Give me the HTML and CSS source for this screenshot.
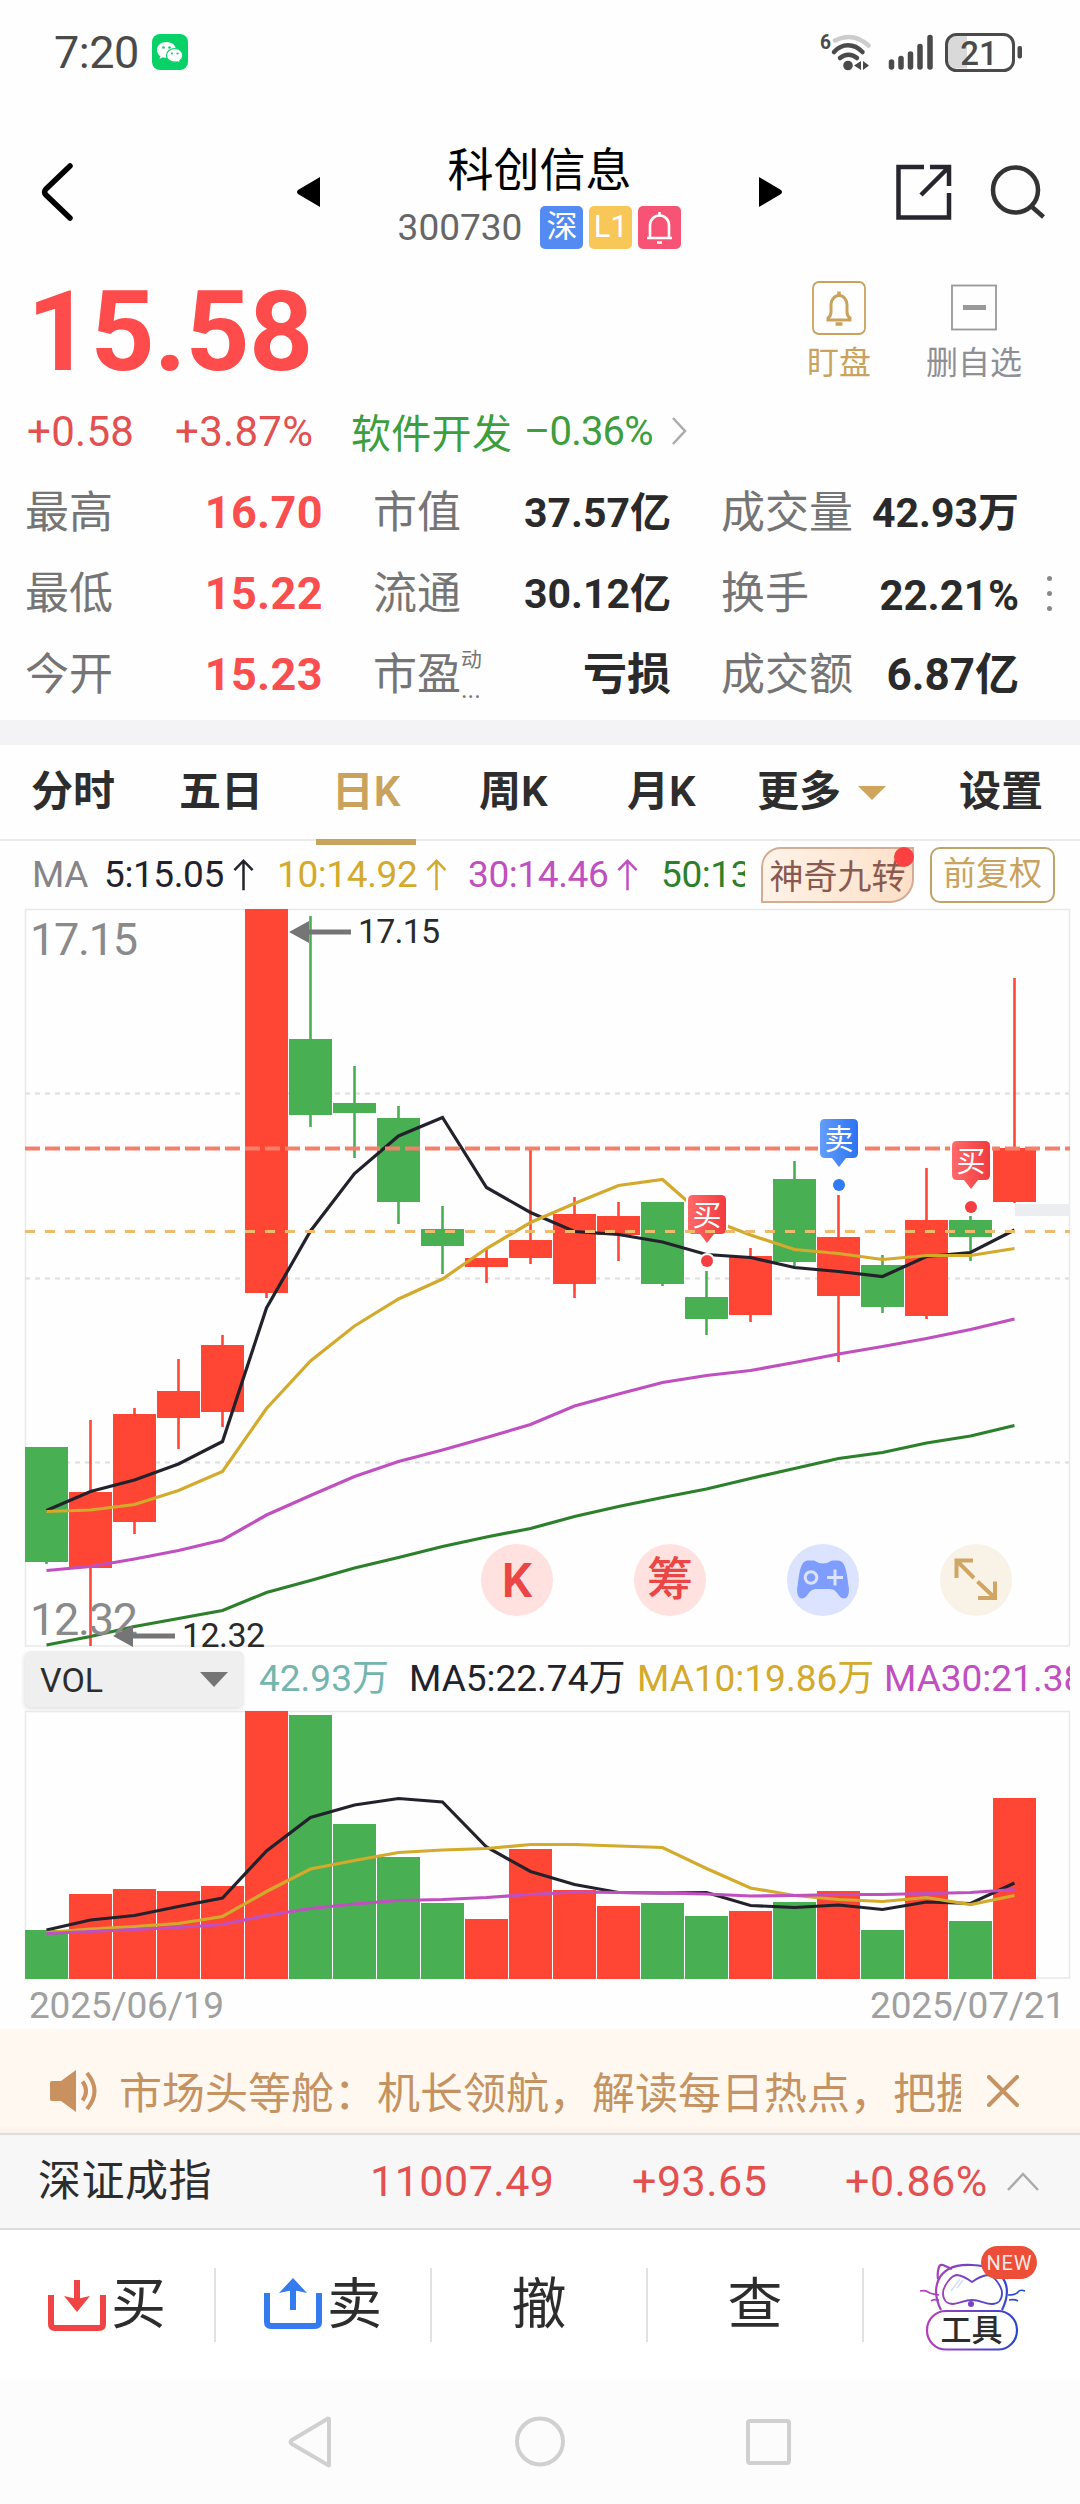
FILE: index.html
```
<!DOCTYPE html>
<html lang="zh-CN">
	<head>
		<meta charset="UTF-8">
		<meta name="viewport" content="width=device-width, initial-scale=1.0">
		<title>科创信息 300730</title>
		<link rel="stylesheet" href="styles.css">
	</head>
	<body>
		<div class="status">
			<span class="time">7:20</span>
			<svg class="wechat" viewBox="0 0 36 36">
				<rect width="36" height="36" rx="8" fill="#07d268"/>
				<path d="M14.5 8C9 8 5 11.500 5 16c0 2.600 1.300 4.700 3.300 6.200L7.500 25l3.300-1.700c1.200.400 2.400.500 3.700.500 5.500 0 9.500-3.400 9.500-7.800S20 8 14.500 8z" fill="#fff"/>
				<path d="M23 14.500c-5 0-8.500 3-8.500 6.900s3.500 6.800 8.500 6.800c1 0 2-.100 2.900-.400l2.600 1.400-.700-2.400c1.900-1.300 3-3.200 3-5.400 0-3.900-3.300-6.900-7.800-6.900z" fill="#fff" stroke="#07d268" stroke-width="1.200"/>
				<g fill="#07d268"><circle cx="11.500" cy="13.500" r="1.300"/><circle cx="17.500" cy="13.500" r="1.300"/><circle cx="20" cy="19.500" r="1.100"/><circle cx="25.500" cy="19.500" r="1.100"/></g>
			</svg>
			<svg class="signals" viewBox="820 28 206 46">
				<text x="820" y="48" font-size="20" font-weight="700" textLength="11" lengthAdjust="spacingAndGlyphs" fill="#4a4a4a">6</text>
				<g fill="none" stroke="#4a4a4a" stroke-width="4.500" stroke-linecap="round">
					<path d="M835 39.500c11-5.500 23-4.500 33.500 5" stroke="#ccc"/>
					<path d="M834 51c8-9 20-9 28.500 0"/>
					<path d="M840 57c5-4.500 12-4.500 17 0"/>
				</g>
				<circle cx="848" cy="64.500" r="4.800" fill="#4a4a4a"/>
				<path d="M861 60v9l-7-4.500zM863 60v9l6-4.500z" fill="#4a4a4a"/>
				<path d="M891.500 61v5M901 57.500v8.500M910.500 53v13M920 45.500v20.500M930 36.500v29.500" stroke="#4a4a4a" stroke-width="5.500" stroke-linecap="round"/>
				<path d="M967 34.500h-10a10 10 0 0 0-10 10v13a10 10 0 0 0 10 10h10z" fill="#d9d9d9"/>
				<rect x="946.500" y="33.500" width="67" height="36" rx="10" fill="none" stroke="#4a4a4a" stroke-width="3"/>
				<rect x="1017.500" y="45" width="4.500" height="12.500" rx="2" fill="#4a4a4a"/>
				<text x="979" y="63.500" font-size="33" font-weight="500" text-anchor="middle" fill="#4a4a4a">21</text>
			</svg>
		</div>

		<header class="header">
			<svg class="back" viewBox="0 0 32 58"><path d="M29 3 5 26q-3 3 0 6l24 23" fill="none" stroke="#000" stroke-width="5.500" stroke-linecap="round"/></svg>
			<svg class="prev" viewBox="0 0 24 30"><path d="M23 0v30L1 17q-2-2 0-4z"/></svg>
			<div class="stock">
				<h1>科创信息</h1>
				<p>300730
					<span class="tag sz">深</span><span class="tag l1">L1</span><span class="tag bell"><svg viewBox="0 0 43 43" fill="none" stroke="#fff" stroke-width="2.600"><path d="M9 32h25M12 31V19a9.500 9.500 0 0 1 19 0v12M21.500 6v4M19 36.500h5"/></svg></span>
				</p>
			</div>
			<svg class="next" viewBox="0 0 24 30"><path d="M1 0v30l22-13q2-2 0-4z"/></svg>
			<svg class="share" viewBox="896 163 56 56" fill="none" stroke="#26262e" stroke-width="4.500"><path d="M924 166h-25.500v50.500H949V192M930 166h19v19M921 194l27-27"/></svg>
			<svg class="search" viewBox="990 164 56 56" fill="none" stroke="#333" stroke-width="4.500"><circle cx="1015.500" cy="190" r="22.500"/><path d="m1031 206 12.500 11"/></svg>
		</header>

		<div class="quote">
			<div class="price">15.58</div>
			<div class="act watch">
				<svg viewBox="0 0 54 54" fill="none" stroke="#c9a25e"><rect x="1" y="1" width="52" height="52" rx="6" stroke-width="1.800"/><path d="M16 39v-2q3-2 3-6v-7a8 9.500 0 0 1 16 0v7q0 4 3 6v2z" stroke-width="3"/><path d="M27 10.500v4M23.500 43h7" stroke-width="3.500"/></svg>
				盯盘
			</div>
			<div class="act remove">
				<svg viewBox="0 0 54 54"><rect x="5" y="4.500" width="44" height="44" fill="none" stroke="#999" stroke-width="1.800"/><path d="M16 26.500h23" stroke="#999" stroke-width="5"/></svg>
				删自选
			</div>
		</div>

		<div class="change">
			<span class="up">+0.58</span>
			<span class="up">+3.87%</span>
			<span class="industry">软件开发</span>
			<span class="down">–0.36%</span>
			<svg viewBox="0 0 16 28"><path d="m2 1 12 13L2 27" fill="none" stroke="#aaa" stroke-width="2.500"/></svg>
		</div>

		<div class="stats">
			<span>最高</span><b class="red">16.70</b><span>市值</span><b>37.57亿</b><span>成交量</span><b>42.93万</b><i></i>
			<span>最低</span><b class="red">15.22</b><span>流通</span><b>30.12亿</b><span>换手</span><b class="pct">22.21%</b><i class="dots"><em></em><em></em><em></em></i>
			<span>今开</span><b class="red">15.23</b><span class="pe">市盈<small><sup>动</sup>...</small></span><b class="loss">亏损</b><span>成交额</span><b class="amount">6.87亿</b><i></i>
		</div>

		<nav class="tabs">
			<a>分时</a><a>五日</a><a class="active">日K</a><a>周K</a><a>月K</a><a class="more">更多</a><a>设置</a>
		</nav>

		<div class="ma">
			<div class="values">
				<span class="c-gray">MA</span>
				<span class="c-black">5:15.05<svg viewBox="0 0 22 34"><path d="M11 33V2M1.500 12 11 2l9.500 10"/></svg></span>
				<span class="c-gold">10:14.92<svg viewBox="0 0 22 34"><path d="M11 33V2M1.500 12 11 2l9.500 10"/></svg></span>
				<span class="c-pink">30:14.46<svg viewBox="0 0 22 34"><path d="M11 33V2M1.500 12 11 2l9.500 10"/></svg></span>
				<span class="c-green">50:13</span>
			</div>
			<div class="nine">神奇九转</div>
			<div class="adjust">前复权</div>
		</div>

		<div class="kline">
			<svg id="kline" viewBox="0 908 1080 740">
				<defs>
					<linearGradient id="buy"><stop offset="0" stop-color="#ff6a6a"/><stop offset="1" stop-color="#f23a3e"/></linearGradient>
					<linearGradient id="sell"><stop offset="0" stop-color="#649dfb"/><stop offset="1" stop-color="#2c73f2"/></linearGradient>
				</defs>
				<g id="grid" fill="none">
					<path d="M25.500 909.500H1069.500V1646H25.500z" stroke="#e9e9e9" stroke-width="1.500"/>
					<path d="M25 1093.500H1069M25 1278.500H1069M25 1462.500H1069" stroke="#dedede" stroke-width="2" stroke-dasharray="5 5"/>
				</g>
				<g id="candles"></g>
				<g id="averages"></g>
				<path d="M1015 1204h55v12h-55z" fill="#ecedf1"/>
				<path d="M25 1148.500H1070" stroke="#f4806a" stroke-width="4" stroke-dasharray="15 5"/>
				<g id="markers"></g>
				<path d="M25 1231.500H1070" stroke="#f0ba6c" stroke-width="3" stroke-dasharray="10 10"/>
				<g fill="#8a8a8a" font-size="45">
					<text x="30" y="955" textLength="108">17.15</text>
					<text x="30" y="1635" textLength="108">12.32</text>
				</g>
				<g fill="#757575">
					<path d="M289 932l20-11v8.500h42v5h-42v8.500z"/>
					<path d="M113 1636l20-11v8.500h42v5h-42v8.500z"/>
				</g>
				<g fill="#2a2a2a" font-size="34">
					<text x="358" y="943" textLength="82">17.15</text>
					<text x="182" y="1647" textLength="83">12.32</text>
				</g>
			</svg>
			<div class="tools">
				<span class="tool k">K</span>
				<span class="tool chip">筹</span>
				<span class="tool game"><svg viewBox="0 0 72 72"><path d="M21 16.500h6q9 6 18 0h6q7 0 9 15l2 14q0 9-5 9c-6 0-6-9.500-14-9.500H29c-8 0-8 9.500-14 9.500q-5 0-5-9l2-14q2-15 9-15z" fill="#7f9dff"/><circle cx="24" cy="33.500" r="5.800" fill="none" stroke="#dbe3ff" stroke-width="3"/><path d="M48 25.500v16M40 33.500h16" stroke="#dbe3ff" stroke-width="3"/></svg></span>
				<span class="tool full"><svg viewBox="0 0 72 72" fill="none" stroke="#d0a565" stroke-width="4"><path d="M33 16.500H16.500V34M17 17l17 17M38 54h17V37.500M55 54 37.500 37.500"/></svg></span>
			</div>
		</div>

		<div class="vol">
			<div class="select">VOL</div>
			<div class="vol-values">
				<span class="c-teal">42.93万</span>
				<span class="c-black">MA5:22.74万</span>
				<span class="c-gold">MA10:19.86万</span>
				<span class="c-pink">MA30:21.38</span>
			</div>
		</div>

		<svg id="volume" viewBox="0 1710 1080 270">
			<path d="M25.500 1711.500H1069.500V1978H25.500z" fill="none" stroke="#e9e9e9" stroke-width="1.500"/>
		</svg>
		<div class="dates"><span>2025/06/19</span><span>2025/07/21</span></div>

		<div class="notice">
			<svg class="speaker" viewBox="0 0 50 44"><path d="M2 12h9L26 1v42L11 32H2q-2 0-2-2V14q0-2 2-2z" fill="#c99160"/><path d="M32.500 12.500q7 9.500 0 19M37 4q15 18 0 36" fill="none" stroke="#c99160" stroke-width="4"/></svg>
			<p>市场头等舱：机长领航，解读每日热点，把握</p>
			<svg class="close" viewBox="0 0 32 32"><path d="m2 2 28 28M30 2 2 30" stroke="#c59262" stroke-width="4" stroke-linecap="round"/></svg>
		</div>

		<div class="index">
			<span>深证成指</span><span class="up">11007.49</span><span class="up">+93.65</span><span class="up">+0.86%</span>
			<svg viewBox="0 0 34 20"><path d="M2 18 17 2l15 16" fill="none" stroke="#aaa" stroke-width="2.500"/></svg>
		</div>

		<div class="actions">
			<a><svg viewBox="0 0 58 58" fill="none" stroke="#f04343" stroke-width="6"><path d="M3 19v29q0 4 4 4h44q4 0 4-4V19M29 4v28"/><path d="m16 20 13 3 13-3-13 16z" fill="#f04343" stroke="none"/></svg>买</a>
			<a><svg viewBox="0 0 58 58" fill="none" stroke="#347bf0" stroke-width="6"><path d="M3 17v29q0 4 4 4h44q4 0 4-4V17M29 34V8"/><path d="m15 17 14-15 14 15-14-3z" fill="#347bf0" stroke="none"/></svg>卖</a>
			<a>撤</a>
			<a>查</a>
			<a class="toolbox">
				<svg viewBox="900 2235 160 130" fill="none" stroke="url(#cat)" stroke-width="2.200">
					<defs><linearGradient id="cat" gradientUnits="userSpaceOnUse" x1="925" y1="0" x2="1018" y2="0"><stop offset="0" stop-color="#b83fb8"/><stop offset="1" stop-color="#2748d0"/></linearGradient></defs>
					<path d="M941 2310q-8-16-3-29c5-12 17-17 34-16s28 5 33 17q5 12-3 28M938 2279q-1-7 1-12 1-3 4-2l9 4M1007 2279q1-7 0-11"/>
					<path d="M957 2275q7 1 15 7 8-6 16-7c6 0 14 12 14 18 0 7-4 11-10 11-7 0-12-4-20-4s-13 4-19 4-10-4-10-11c0-6 8-18 14-18z" stroke-width="1.800"/>
					<path d="M939 2295q-8-1-11-3t-8-1M939 2300q-6-1-8 1M1008 2295q8 0 10-3t7-1M1009 2300q6-1 9 1" stroke-width="1.600"/>
					<path d="m951 2291 9-12M957 2288l6-8" stroke="#d5dcf8" stroke-width="1.500"/>
					<rect x="927" y="2311" width="90" height="38.500" rx="19"/>
					<circle cx="971" cy="2304" r="3" fill="#7d3fcb" stroke="none"/>
					<rect x="981" y="2246" width="56" height="33" rx="16.500" fill="#ed4e37" stroke="none"/>
					<text x="1009" y="2269.500" font-size="20" text-anchor="middle" textLength="45" fill="#fff" fill-opacity=".9" stroke="none">NEW</text>
					<text x="971.500" y="2341" font-size="31" text-anchor="middle" textLength="62" fill="#2d2d2d" font-weight="500" stroke="none">工具</text>
				</svg>
			</a>
		</div>

		<div class="sysnav">
			<svg viewBox="270 2400 540 84" fill="none" stroke="#d0d0d0" stroke-width="4">
				<path d="M329 2419.500v45.500q0 1-1 0l-36-21q-3-2 0-4l36-21.500q1 0 1 1z"/>
				<circle cx="540" cy="2441.500" r="23"/>
				<rect x="748" y="2421" width="41" height="42" rx="2"/>
			</svg>
		</div>
		<script src="chart.js"></script>
	</body>
</html>
```
FILE: styles.css
```
* {
	box-sizing: border-box;
}

body {
	margin: 0;
	width: 1080px;
	background-color: #fefefe;
	color: #2d2d2d;
	font-family: Roboto, "Noto Sans CJK SC", sans-serif;
}

h1, p {
	margin: 0;
	font-weight: 400;
}

svg {
	display: block;
	flex: none;
}

/* top of the screen */

.status {
	display: flex;
	align-items: center;
	height: 104px;
	padding: 0 54px 0 54px;
}

.time {
	width: 98px;
	font-size: 45px;
	letter-spacing: -0.5px;
	color: #4a4a4a;
}

.wechat {
	width: 36px;
	height: 36px;
}

.signals {
	width: 206px;
	height: 46px;
	margin-left: auto;
}

.header {
	display: flex;
	align-items: center;
	height: 176px;
	padding: 0 34px 0 41px;
}

.back {
	width: 32px;
	height: 58px;
}

.prev {
	width: 24px;
	height: 30px;
	margin-left: 224px;
}

.next {
	width: 24px;
	height: 30px;
}

.stock {
	width: 437px;
	text-align: center;
}

.stock h1 {
	margin-top: 11px;
	font-size: 46px;
	line-height: 60px;
	color: #000;
}

.stock p {
	display: flex;
	align-items: center;
	justify-content: center;
	gap: 6px;
	font-size: 37px;
	line-height: 56px;
	color: #666;
}

.tag {
	width: 43px;
	height: 43px;
	border-radius: 5px;
	font-size: 31px;
	line-height: 42px;
	color: #fff;
}

.sz {
	margin-left: 12px;
	background-color: #548bf2;
}

.l1 {
	background-color: #f7c757;
}

.bell {
	background-color: #f75475;
}

.share {
	width: 56px;
	height: 56px;
	margin-left: 114px;
}

.search {
	width: 56px;
	height: 56px;
	margin-left: auto;
}

/* quote */

.quote {
	display: flex;
	height: 110px;
}

.price {
	width: 775px;
	padding-left: 27px;
	font-size: 112px;
	font-weight: 700;
	line-height: 103px;
	letter-spacing: -0.8px;
	color: #fe4b4b;
}

.act {
	display: flex;
	flex-direction: column;
	align-items: center;
	width: 128px;
	font-size: 32px;
	line-height: 56px;
}

.act svg {
	width: 54px;
	height: 54px;
	margin-top: 1px;
}

.watch {
	color: #c9a25e;
}

.remove {
	width: 142px;
	color: #8f8f94;
}

.up {
	color: #e35050;
}

.down, .industry {
	color: #3c9e3c;
}

.change {
	display: grid;
	grid-template-columns: 148px 176px 173px 147px 16px;
	align-items: center;
	height: 82px;
	padding-left: 27px;
	font-size: 42px;
	letter-spacing: 0.3px;
}

.change .industry {
	font-size: 40px;
}

.change .down {
	font-size: 40px;
	letter-spacing: -0.8px;
}

.change svg {
	width: 16px;
	height: 28px;
}

.stats {
	display: grid;
	grid-template-columns: 130px 168px 200px 148px 190px 158px 60px;
	grid-auto-rows: 81px;
	align-items: center;
	height: 248px;
	padding-left: 25px;
	font-size: 44px;
	line-height: 60px;
	color: #757575;
}

.stats > span {
	white-space: nowrap;
}

.stats > span:nth-child(7n + 3) {
	padding-left: 50px;
}

.stats > span:nth-child(7n + 5) {
	padding-left: 50px;
}

.stats b {
	justify-self: end;
	font-size: 41px;
	color: #2a2a2a;
	white-space: nowrap;
}

.stats b.red {
	font-size: 45px;
	letter-spacing: 0.4px;
	color: #fb4e4e;
}

.stats .pct {
	padding-top: 4px;
	font-size: 42px;
}

.stats .loss {
	font-size: 44px;
}

.stats .amount {
	font-size: 44px;
}

.stats .pe {
	display: flex;
}

.pe small {
	display: flex;
	flex-direction: column;
	font-size: 25px;
	line-height: 30px;
}

.pe sup {
	height: 30px;
	line-height: 30px;
	vertical-align: baseline;
}

.dots {
	display: grid;
	gap: 10px;
	justify-self: center;
}

.dots em {
	width: 5px;
	height: 5px;
	border-radius: 50%;
	background-color: #888;
}

/* period tabs */

.tabs {
	display: grid;
	grid-template-columns: 148px 137px 163px 148px 130px 202px 120px;
	height: 121px;
	padding-left: 31px;
	border-top: 25px solid #f3f3f5;
	border-bottom: 2px solid #ebebeb;
	font-size: 42px;
	font-weight: 600;
	line-height: 94px;
}

.tabs .active {
	width: 100px;
	border-bottom: 6px solid #c9a25e;
	text-align: center;
	color: #c9a25e;
}

.more::after {
	content: "";
	display: inline-block;
	margin-left: 17px;
	border: 14px solid transparent;
	border-top-color: #d0a45a;
	border-bottom: none;
	vertical-align: 6px;
}

.ma {
	display: flex;
	align-items: center;
	height: 67px;
	padding-left: 32px;
}

.values {
	display: grid;
	grid-template-columns: 72px 173px 191px 193px 84px;
	overflow: hidden;
	padding-top: 1px;
	font-size: 37px;
	line-height: 60px;
	letter-spacing: -0.4px;
}

.values span {
	display: flex;
	align-items: center;
}

.values svg {
	width: 21px;
	height: 34px;
	margin-left: 9px;
	fill: none;
	stroke: currentColor;
	stroke-width: 2.6;
}

.c-gray { color: #858589; }
.c-black { color: #22222c; }
.c-gold { color: #d3aa2b; }
.c-pink { color: #c04fc0; }
.c-green { color: #2c802c; }
.c-teal { color: #74b5ae; }

.nine {
	position: relative;
	width: 153px;
	height: 56px;
	margin-left: 16px;
	border: 2px solid #d2ad93;
	border-radius: 20px 0 24px 0;
	background-image: linear-gradient(100deg, #fff3e9, #fddfc6);
	font-size: 34px;
	line-height: 57px;
	text-align: center;
	color: #8a5a50;
	white-space: nowrap;
}

.nine::after {
	content: "";
	position: absolute;
	top: -2px;
	right: -2px;
	width: 20px;
	height: 20px;
	border-radius: 50%;
	background-color: #fa4040;
}

.adjust {
	width: 125px;
	height: 56px;
	margin-left: 16px;
	border: 2.5px solid #bfa468;
	border-radius: 10px;
	font-size: 33px;
	line-height: 49px;
	text-align: center;
	color: #c9a25e;
}

/* charts */

.kline {
	position: relative;
	height: 740px;
}

#kline {
	width: 1080px;
	height: 740px;
}

#kline .tag-text {
	font-size: 29px;
	fill: #fff;
	text-anchor: middle;
}

.tools {
	position: absolute;
	left: 481px;
	top: 636px;
	display: flex;
	gap: 81px;
}

.tool {
	width: 72px;
	height: 72px;
	border-radius: 50%;
	background-color: #ffe1df;
	font-size: 46px;
	line-height: 70px;
	text-align: center;
	color: #ea4646;
}

.k {
	font-size: 48px;
	font-weight: 600;
	line-height: 73px;
}

.chip {
	font-weight: 500;
}

.game {
	background-color: #dbe3ff;
}

.full {
	background-color: #f9f2e6;
}

.vol {
	display: flex;
	height: 62px;
	padding: 3px 9px 0 25px;
}

.select {
	display: flex;
	align-items: center;
	justify-content: space-between;
	flex: none;
	width: 219px;
	height: 56px;
	padding: 1px 16px 0 15px;
	border-radius: 6px;
	background-color: #efefef;
	box-shadow: -1px 2px 4px rgba(0, 0, 0, .12);
	font-size: 34px;
}

.select::after {
	content: "";
	border: 14px solid transparent;
	border-top: 15px solid #757575;
	border-bottom: none;
}

.vol-values {
	display: grid;
	grid-template-columns: 150px 228px 247px 186px;
	margin-left: 15px;
	overflow: hidden;
	font-size: 37px;
	line-height: 55px;
	white-space: nowrap;
}

#volume {
	width: 1080px;
	height: 270px;
}

.dates {
	display: flex;
	justify-content: space-between;
	height: 49px;
	padding: 0 15px 0 29px;
	font-size: 37px;
	line-height: 51px;
	letter-spacing: -0.2px;
	color: #a0a0a0;
}

/* bottom bars */

.notice {
	display: flex;
	align-items: center;
	height: 104px;
	padding: 20px 61px 0 50px;
	background-image: linear-gradient(#fef8f1 92%, #f8f2eb);
	font-size: 43px;
	color: #c59262;
}

.speaker {
	width: 50px;
	height: 44px;
}

.notice p {
	width: 842px;
	margin: -2px 0 0 19px;
	overflow: hidden;
	white-space: nowrap;
}

.close {
	width: 32px;
	height: 32px;
	margin-left: auto;
}

.index {
	display: grid;
	grid-template-columns: 332px 262px 213px 161px 34px;
	align-items: center;
	height: 97px;
	padding-left: 38px;
	border-top: 2px solid #ddd;
	border-bottom: 2px solid #ddd;
	background-color: #f7f7f7;
	font-size: 43px;
	letter-spacing: 0.5px;
}

.index span {
	line-height: 60px;
	margin-top: -1px;
}

.index svg {
	width: 34px;
	height: 20px;
}

.actions {
	display: grid;
	grid-template-columns: repeat(5, 216px);
	height: 150px;
	background-color: #fff;
	font-size: 55px;
	line-height: 70px;
}

.actions a {
	display: flex;
	align-items: center;
	justify-content: center;
	gap: 5px;
	height: 74px;
	margin-top: 38px;
	padding-bottom: 3px;
	border-right: 2px solid #e2e2e2;
}

.actions a > svg {
	width: 58px;
	height: 58px;
	margin-top: 2px;
}

.actions .toolbox {
	height: 130px;
	margin-top: 5px;
	padding-bottom: 0;
	border-right: none;
}

.actions .toolbox > svg {
	width: 160px;
	height: 130px;
	margin: 0 0 0 16px;
}

.sysnav {
	height: 124px;
	padding: 20px 270px 0;
	background-color: #fcfcfc;
}

.sysnav svg {
	width: 540px;
	height: 84px;
}
```
FILE: chart.js
```
const $ = (x) => document.querySelector(x);

const RED = "#ff4634";
const GREEN = "#49af53";
const left = 25, step = 44, width = 43;

// color, wick top, body top, body bottom, wick bottom
const candles = [
	[GREEN, 1447, 1447, 1562, 1564],
	[RED, 1420, 1492, 1568, 1646],
	[RED, 1408, 1414, 1522, 1534],
	[RED, 1359, 1391, 1418, 1449],
	[RED, 1335, 1345, 1412, 1427],
	[RED, 909, 909, 1293, 1298],
	[GREEN, 916, 1039, 1115, 1127],
	[GREEN, 1066, 1103, 1113, 1158],
	[GREEN, 1106, 1118, 1202, 1224],
	[GREEN, 1206, 1229, 1246, 1274],
	[RED, 1248, 1258, 1267, 1283],
	[RED, 1149, 1240, 1258, 1264],
	[RED, 1197, 1214, 1284, 1298],
	[RED, 1202, 1216, 1235, 1261],
	[GREEN, 1202, 1202, 1284, 1286],
	[GREEN, 1271, 1297, 1319, 1335],
	[RED, 1248, 1256, 1315, 1322],
	[GREEN, 1161, 1179, 1262, 1266],
	[RED, 1195, 1237, 1296, 1362],
	[GREEN, 1255, 1265, 1307, 1313],
	[RED, 1168, 1220, 1316, 1319],
	[GREEN, 1216, 1220, 1237, 1261],
	[RED, 978, 1148, 1202, 1203]
];

const averages = {
	"#22222c": [1510.5, 1491.5, 1480, 1464, 1441.5, 1308, 1231, 1173.5, 1136, 1117.5, 1187.5, 1212.5, 1231.5, 1234.5, 1242, 1254.5, 1257.5, 1267.5, 1271.5, 1276.5, 1256.5, 1252.5, 1230],
	"#d3aa2b": [1511.5, 1510, 1504.5, 1490.5, 1471.5, 1408.5, 1361, 1326, 1299, 1279, 1248.5, 1222.5, 1203.5, 1185.5, 1179.5, 1218, 1235, 1249.5, 1253.5, 1259.5, 1255.5, 1255.5, 1248.5],
	"#c04fc0": [1570.5, 1566.5, 1559, 1550.5, 1540, 1515, 1495.5, 1476.5, 1461.5, 1450, 1437.5, 1424.5, 1406, 1394, 1382.5, 1375.5, 1370.5, 1362.5, 1354, 1346.5, 1338.5, 1329.5, 1319],
	"#2c802c": [1645, 1636.5, 1626.5, 1618.5, 1610.5, 1592.5, 1580.5, 1568, 1557.5, 1546.5, 1537, 1528.5, 1516.5, 1506.5, 1497.5, 1489, 1478.5, 1468.5, 1458.5, 1452.5, 1443, 1436, 1425.5]
};

const volumes = [1930, 1894, 1889, 1891, 1886, 1711, 1715, 1824, 1857, 1903, 1919, 1849, 1890, 1906, 1903, 1916, 1911, 1902, 1891, 1930, 1876, 1921, 1798];

const volumeAverages = {
	"#22222c": [1930, 1920, 1915.5, 1906.5, 1898, 1851, 1817.5, 1805, 1798.5, 1802, 1847, 1871.5, 1884.5, 1892.5, 1893, 1892.5, 1905.5, 1907.5, 1905, 1909.5, 1902, 1903.5, 1883],
	"#d3aa2b": [1932.5, 1929, 1926.5, 1923.5, 1916.5, 1891.5, 1869, 1860.5, 1852.5, 1850, 1848.5, 1844.5, 1844.5, 1846, 1847.5, 1868.5, 1888, 1895.5, 1899.5, 1901.5, 1897.5, 1904.5, 1895.5],
	"#c04fc0": [1933.5, 1931.5, 1929.5, 1927.5, 1924.5, 1915.5, 1908.5, 1904, 1900.5, 1899.5, 1897.5, 1894.5, 1892, 1892.5, 1893, 1894, 1896, 1895.5, 1894.5, 1894.5, 1893.5, 1892.5, 1889.5]
};

// center x, top y, kind
const marks = [[707, 1195, "买"], [839, 1119, "卖"], [971, 1141, "买"]];

const rect = (i, top, bottom, color) =>
	`<rect x="${left + i * step}" y="${top}" width="${width}" height="${bottom - top}" fill="${color}"/>`;

const line = (ys, color) => {
	const points = ys.map((y, i) => `${left + 21.5 + i * step},${y}`).join(" ");
	return `<polyline points="${points}" fill="none" stroke="${color}" stroke-width="3.2"/>`;
}

let out = "";
candles.forEach(([color, high, top, bottom, low], i) => {
	out += `<path d="M${left + 21.5 + i * step} ${high}V${low}" stroke="${color}" stroke-width="2.6"/>`;
	out += rect(i, top, bottom, color);
});
$("#candles").innerHTML = out;

out = "";
for (const color in averages) out += line(averages[color], color);
$("#averages").innerHTML = out;

out = "";
for (const [x, y, kind] of marks) {
	const sell = kind === "卖";
	const shape = `M${x - 14} ${y}h28q5 0 5 5v29q0 5-5 5h-7l-7 9-7-9h-7q-5 0-5-5v-29q0-5 5-5z`;
	out += `<path d="${shape}" fill="url(#${sell ? "sell" : "buy"})" stroke="#fff" stroke-width="4" paint-order="stroke"/>
		<text class="tag-text" x="${x}" y="${y + 31}">${kind}</text>
		<circle cx="${x}" cy="${y + 66}" r="6" fill="${sell ? "#2f7bf5" : "#f43e42"}" stroke="#fff" stroke-width="4" paint-order="stroke"/>`;
}
$("#markers").innerHTML = out;

out = "";
volumes.forEach((top, i) => {
	out += rect(i, top, 1979, candles[i][0]);
});
for (const color in volumeAverages) out += line(volumeAverages[color], color);
$("#volume").innerHTML += out;
```
